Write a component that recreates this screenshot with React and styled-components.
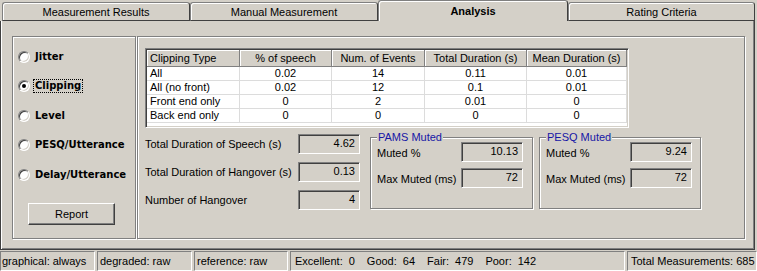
import React from 'react';
import styled, { createGlobalStyle, css } from 'styled-components';

const face = '#d4d0c8';
const shadow = '#808080';
const dark = '#404040';

const GlobalStyle = createGlobalStyle`
  html, body {
    margin: 0;
    padding: 0;
    background: ${face};
  }
  body {
    font-family: "Liberation Sans", Arial, sans-serif;
    font-size: 11px;
    color: #000;
  }
  * {
    box-sizing: border-box;
  }
`;

const sunken = css`
  border: 1px solid;
  border-color: ${shadow} #fff #fff ${shadow};
  box-shadow: inset 1px 1px 0 ${dark}, inset -1px -1px 0 ${face};
`;

const etched = css`
  border: 1px solid ${shadow};
  box-shadow: inset 1px 1px 0 #fff, 1px 1px 0 #fff;
`;

const Window = styled.div`
  width: 757px;
  height: 271px;
  display: flex;
  flex-direction: column;
  background: ${face};
  overflow: hidden;
`;

const TabStrip = styled.div`
  display: flex;
  align-items: flex-end;
  height: 21px;
  padding: 0 2px;
`;

const Tab = styled.div`
  width: ${p => p.$width}px;
  height: ${p => (p.$active ? 21 : 19)}px;
  display: flex;
  align-items: center;
  justify-content: center;
  border: 1px solid ${shadow};
  border-right-color: ${dark};
  border-bottom: ${p => (p.$active ? 'none' : `1px solid ${dark}`)};
  border-radius: 3px 3px 0 0;
  box-shadow: inset 1px 1px 0 #fff;
  font-weight: ${p => (p.$active ? 700 : 400)};
  padding-bottom: ${p => (p.$active ? 1 : 0)}px;
`;

const Panel = styled.div`
  height: 229px;
  margin-right: 2px;
  display: flex;
  gap: 1px;
  padding: 15px 9px 10px 11px;
  border: 1px solid ${dark};
  border-top: none;
  box-shadow: inset 1px 0 0 #fff, inset -1px -1px 0 ${shadow};
`;

const LeftGroup = styled.div`
  ${etched};
  width: 124px;
  display: flex;
  flex-direction: column;
  padding: 5px 0 0 5px;
`;

const RadioRow = styled.div`
  height: 29.5px;
  display: flex;
  align-items: center;
  gap: 5px;
`;

const RadioCircle = styled.span`
  flex: none;
  width: 12px;
  height: 12px;
  border-radius: 50%;
  background: #fff;
  border: 1px solid;
  border-color: ${shadow} #fff #fff ${shadow};
  box-shadow: inset 1px 1px 0 ${dark}, inset -1px -1px 0 ${face};
  display: flex;
  align-items: center;
  justify-content: center;

  &::after {
    content: '';
    width: 4px;
    height: 4px;
    border-radius: 50%;
    background: ${p => (p.$checked ? '#000' : 'transparent')};
  }
`;

const RadioLabel = styled.span`
  font-family: "DejaVu Sans", Verdana, sans-serif;
  font-weight: 700;
  font-size: 10px;
  line-height: 12px;
  padding: 0 1px;
  margin-left: -1px;
  outline: ${p => (p.$focused ? '1px dotted #000' : 'none')};
`;

const Button = styled.div`
  width: 87px;
  height: 22px;
  margin: 13.5px 0 0 10px;
  display: flex;
  align-items: center;
  justify-content: center;
  border: 1px solid;
  border-color: #fff ${dark} ${dark} #fff;
  box-shadow: inset -1px -1px 0 ${shadow};
`;

const RightGroup = styled.div`
  ${etched};
  flex: 1;
  display: flex;
  flex-direction: column;
  padding: 11px 0 0 7px;
`;

const TableFrame = styled.div`
  ${sunken};
  width: 484px;
  height: 80px;
  padding: 1px;
  background: #fff;
  overflow: hidden;
`;

const Table = styled.table`
  width: 480px;
  table-layout: fixed;
  border-collapse: separate;
  border-spacing: 0;
  font-size: 11px;
`;

const HeadCell = styled.th`
  height: 17px;
  padding: 0 3px;
  font-weight: 400;
  text-align: ${p => p.$align || 'center'};
  white-space: nowrap;
  background: ${face};
  border-right: 1px solid ${shadow};
  border-bottom: 1px solid ${shadow};
  box-shadow: inset 1px 1px 0 #fff;
`;

const Cell = styled.td`
  height: 14px;
  padding: 0 3px;
  line-height: 13px;
  text-align: ${p => p.$align || 'center'};
  white-space: nowrap;
  overflow: hidden;
  border-right: 1px solid #dcdcdc;
  border-bottom: 1px solid #dcdcdc;
`;

const Lower = styled.div`
  display: flex;
  align-items: flex-start;
  margin-top: 6px;
`;

const StatsColumn = styled.div`
  display: flex;
  flex-direction: column;
  gap: 8px;
`;

const StatRow = styled.div`
  display: flex;
  align-items: center;
`;

const StatLabel = styled.span`
  width: ${p => p.$width}px;
  padding-top: ${p => p.$drop || 0}px;
  white-space: nowrap;
`;

const ValueBox = styled.div`
  ${sunken};
  width: 62px;
  height: 20px;
  display: flex;
  align-items: center;
  justify-content: flex-end;
  padding: 0 4px 2px 0;
`;

const GroupBox = styled.div`
  ${etched};
  width: ${p => p.$width}px;
  height: 72px;
  margin: 3px 0 0 ${p => p.$gap}px;
  display: flex;
  flex-direction: column;
  padding: 0 0 0 6px;
`;

const Caption = styled.span`
  align-self: flex-start;
  margin-top: -7px;
  padding: 0 1px;
  line-height: 13px;
  background: ${face};
  color: #1616a6;
`;

const GroupRows = styled.div`
  display: flex;
  flex-direction: column;
  gap: 6px;
  margin-top: -2px;
`;

const StatusBar = styled.div`
  height: 20px;
  margin-top: 1px;
  display: flex;
  gap: 2px;
`;

const StatusCell = styled.div`
  width: ${p => (p.$width ? `${p.$width}px` : 'auto')};
  flex: ${p => (p.$width ? 'none' : 1)};
  min-width: 0;
  display: flex;
  align-items: center;
  gap: 12px;
  padding: 0 0 1px ${p => p.$pad ?? 2}px;
  border: 1px solid;
  border-color: ${shadow} #fff #fff ${shadow};
  white-space: nowrap;
`;

const Pair = styled.span`
  display: flex;
  gap: 6px;
`;

const tabs = [
  { label: 'Measurement Results', width: 188 },
  { label: 'Manual Measurement', width: 188 },
  { label: 'Analysis', width: 190, active: true },
  { label: 'Rating Criteria', width: 187 },
];

const radios = ['Jitter', 'Clipping', 'Level', 'PESQ/Utterance', 'Delay/Utterance'];

const columns = [
  { title: 'Clipping Type', width: 93, align: 'left' },
  { title: '% of speech', width: 92 },
  { title: 'Num. of Events', width: 93 },
  { title: 'Total Duration (s)', width: 102 },
  { title: 'Mean Duration (s)', width: 100 },
];

const rows = [
  ['All', '0.02', '14', '0.11', '0.01'],
  ['All (no front)', '0.02', '12', '0.1', '0.01'],
  ['Front end only', '0', '2', '0.01', '0'],
  ['Back end only', '0', '0', '0', '0'],
];

const stats = [
  ['Total Duration of Speech (s)', '4.62'],
  ['Total Duration of Hangover (s)', '0.13'],
  ['Number of Hangover', '4'],
];

const muted = [
  { title: 'PAMS Muted', width: 163, gap: 10, pct: '10.13', max: '72' },
  { title: 'PESQ Muted', width: 162, gap: 6, pct: '9.24', max: '72' },
];

const ratings = [
  ['Excellent:', '0'],
  ['Good:', '64'],
  ['Fair:', '479'],
  ['Poor:', '142'],
];

export default function App() {
  return (
    <Window>
      <GlobalStyle />
      <TabStrip>
        {tabs.map(t => (
          <Tab key={t.label} $width={t.width} $active={t.active}>
            {t.label}
          </Tab>
        ))}
      </TabStrip>

      <Panel>
        <LeftGroup>
          {radios.map(r => (
            <RadioRow key={r}>
              <RadioCircle $checked={r === 'Clipping'} />
              <RadioLabel $focused={r === 'Clipping'}>{r}</RadioLabel>
            </RadioRow>
          ))}
          <Button>Report</Button>
        </LeftGroup>

        <RightGroup>
          <TableFrame>
            <Table>
              <colgroup>
                {columns.map(c => (
                  <col key={c.title} style={{ width: c.width }} />
                ))}
              </colgroup>
              <thead>
                <tr>
                  {columns.map(c => (
                    <HeadCell key={c.title} $align={c.align}>{c.title}</HeadCell>
                  ))}
                </tr>
              </thead>
              <tbody>
                {rows.map(r => (
                  <tr key={r[0]}>
                    {r.map((v, i) => (
                      <Cell key={i} $align={columns[i].align}>{v}</Cell>
                    ))}
                  </tr>
                ))}
              </tbody>
            </Table>
          </TableFrame>

          <Lower>
            <StatsColumn>
              {stats.map(([label, value]) => (
                <StatRow key={label}>
                  <StatLabel $width={153}>{label}</StatLabel>
                  <ValueBox>{value}</ValueBox>
                </StatRow>
              ))}
            </StatsColumn>

            {muted.map(g => (
              <GroupBox key={g.title} $width={g.width} $gap={g.gap}>
                <Caption>{g.title}</Caption>
                <GroupRows>
                  <StatRow>
                    <StatLabel $width={84} $drop={2}>Muted %</StatLabel>
                    <ValueBox>{g.pct}</ValueBox>
                  </StatRow>
                  <StatRow>
                    <StatLabel $width={84} $drop={2}>Max Muted (ms)</StatLabel>
                    <ValueBox>{g.max}</ValueBox>
                  </StatRow>
                </GroupRows>
              </GroupBox>
            ))}
          </Lower>
        </RightGroup>
      </Panel>

      <StatusBar>
        <StatusCell $width={95} $pad={1}>graphical: always</StatusCell>
        <StatusCell $width={95}>degraded: raw</StatusCell>
        <StatusCell $width={94}>reference: raw</StatusCell>
        <StatusCell $width={335} $pad={4}>
          {ratings.map(([k, v]) => (
            <Pair key={k}>
              <span>{k}</span>
              <span>{v}</span>
            </Pair>
          ))}
        </StatusCell>
        <StatusCell $pad={3}>Total Measurements: 685</StatusCell>
      </StatusBar>
    </Window>
  );
}
